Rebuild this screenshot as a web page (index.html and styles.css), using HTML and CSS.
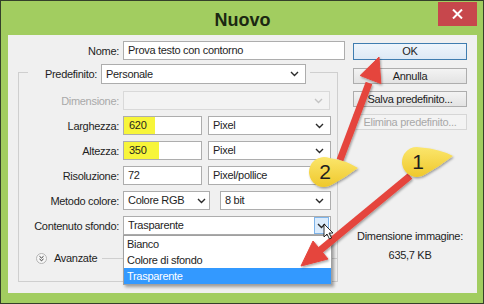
FILE: index.html
```html
<!DOCTYPE html>
<html lang="it">
<head>
    <meta charset="UTF-8">
    <title>Nuovo</title>
    <link rel="stylesheet" href="styles.css">
</head>
<body>
<div class="window">
    <!-- Title bar -->
    <div class="titlebar">
        <span></span>
        <div class="title">Nuovo</div>
        <button class="close">
            <svg width="11" height="10" viewBox="0 0 11 10"><path d="M1 0.5 L10 9.5 M10 0.5 L1 9.5" stroke="#fff" stroke-width="2"/></svg>
        </button>
    </div>

    <div class="client">
        <div class="main">
            <div class="row row-name">
                <label class="label label-name">Nome:</label>
                <div class="field w-name">Prova testo con contorno</div>
            </div>

            <!-- Preset group -->
            <div class="group">
                <div class="group-head">
                    <label class="label label-head">Predefinito:</label>
                    <div class="select w-preset"><span>Personale</span><svg class="chev" viewBox="0 0 9 6"><path d="M1 1 L4.5 4.5 L8 1"/></svg></div>
                </div>

                <div class="rows">
                    <div class="row">
                        <label class="label disabled">Dimensione:</label>
                        <div class="select w-dim off"><span></span><svg class="chev" viewBox="0 0 9 6"><path d="M1 1 L4.5 4.5 L8 1"/></svg></div>
                    </div>
                    <div class="row">
                        <label class="label">Larghezza:</label>
                        <div class="field w-num"><span class="mark">620</span></div>
                        <div class="select w-unit"><span>Pixel</span><svg class="chev" viewBox="0 0 9 6"><path d="M1 1 L4.5 4.5 L8 1"/></svg></div>
                    </div>
                    <div class="row">
                        <label class="label">Altezza:</label>
                        <div class="field w-num"><span class="mark mark-wide">350</span></div>
                        <div class="select w-unit"><span>Pixel</span><svg class="chev" viewBox="0 0 9 6"><path d="M1 1 L4.5 4.5 L8 1"/></svg></div>
                    </div>
                    <div class="row">
                        <label class="label">Risoluzione:</label>
                        <div class="field w-num pad">72</div>
                        <div class="select w-unit"><span>Pixel/pollice</span><svg class="chev" viewBox="0 0 9 6"><path d="M1 1 L4.5 4.5 L8 1"/></svg></div>
                    </div>
                    <div class="row">
                        <label class="label">Metodo colore:</label>
                        <div class="select w-mode"><span>Colore RGB</span><svg class="chev" viewBox="0 0 9 6"><path d="M1 1 L4.5 4.5 L8 1"/></svg></div>
                        <div class="select w-bits"><span>8 bit</span><svg class="chev" viewBox="0 0 9 6"><path d="M1 1 L4.5 4.5 L8 1"/></svg></div>
                    </div>
                    <div class="row">
                        <label class="label">Contenuto sfondo:</label>
                        <div class="select w-bg open">
                            <span>Trasparente</span>
                            <span class="drop-btn"><svg class="chev" viewBox="0 0 9 6"><path d="M1 1 L4.5 4.5 L8 1"/></svg></span>
                            <!-- Open dropdown list -->
                            <ul class="menu">
                                <li>Bianco</li>
                                <li>Colore di sfondo</li>
                                <li class="selected">Trasparente</li>
                            </ul>
                        </div>
                    </div>
                </div>

                <div class="advanced">
                    <svg class="adv-icon" width="11" height="11" viewBox="0 0 11 11">
                        <circle cx="5.5" cy="5.5" r="5" fill="#f7f7f7" stroke="#b4b4b4"/>
                        <path d="M3.5 3.3 L5.5 5 L7.5 3.3 M3.5 6 L5.5 7.7 L7.5 6" fill="none" stroke="#333" stroke-width="1"/>
                    </svg>
                    <span>Avanzate</span>
                    <span class="rule"></span>
                </div>
            </div>
        </div>

        <!-- Buttons column -->
        <div class="side">
            <div class="btn btn-ok">OK</div>
            <div class="btn">Annulla</div>
            <div class="btn">Salva predefinito...</div>
            <div class="btn btn-off">Elimina predefinito...</div>
            <div class="info">Dimensione immagine:</div>
            <div class="info info-size">635,7 KB</div>
        </div>
    </div>

    <!-- Tutorial annotations drawn over the dialog -->
    <svg class="annotations" width="484" height="304" viewBox="0 0 484 304">
        <defs>
            <linearGradient id="yel" x1="0" y1="0" x2="0" y2="1">
                <stop offset="0" stop-color="#fbe66c"/>
                <stop offset="1" stop-color="#efc82c"/>
            </linearGradient>
            <filter id="sh" x="-20%" y="-20%" width="140%" height="140%">
                <feDropShadow dx="1" dy="1.5" stdDeviation="1.2" flood-opacity="0.35"/>
            </filter>
        </defs>

        <g filter="url(#sh)" fill="#e5453d" stroke="#e5453d">
            <line x1="340" y1="160" x2="369" y2="83" stroke-width="7"/>
            <polygon points="379,57 380.8,83.5 360.2,75.5" stroke-width="1" stroke-linejoin="round"/>
            <line x1="410" y1="176" x2="318" y2="252" stroke-width="7"/>
            <polygon points="301,266 328,259 313,241" stroke-width="1" stroke-linejoin="round"/>
        </g>

        <g filter="url(#sh)" fill="url(#yel)">
            <path d="M329.4 158 Q345 160 358 168 Q346 177 331.8 184.8 A15 15 0 1 1 329.4 158 Z"/>
            <path d="M421 147.5 Q440 149 453 156 Q440 166 425.5 174.3 A15 15 0 1 1 421 147.5 Z"/>
        </g>
        <text class="num" x="325" y="179">2</text>
        <text class="num" x="418" y="169">1</text>

        <path class="cursor" d="M324 224 L324 237 L327 234 L329.5 239 L331.5 238 L329 233 L333 233 Z"/>
    </svg>
</div>
</body>
</html>
```

FILE: styles.css
```css
/* Page */
body {
    margin: 0;
    font-family: "Liberation Sans", Arial, sans-serif;
    font-size: 11px;
    letter-spacing: -0.3px;
    color: #1e1e1e;
}

/* Dialog window with green frame */
.window {
    position: relative;
    width: 484px;
    height: 304px;
    box-sizing: border-box;
    border: 1px solid #34402a;
    background: #a2cd60;
    padding: 0 6px 10px 7px;
    display: flex;
    flex-direction: column;
}

.titlebar {
    height: 34px;
    flex: none;
    display: grid;
    grid-template-columns: 1fr auto 1fr;
    align-items: start;
}

.title {
    font-size: 18px;
    font-weight: bold;
    letter-spacing: 0;
    line-height: 30px;
    padding-top: 4px;
    color: #1b2812;
}

.close {
    justify-self: end;
    margin-top: 1px;
    width: 39px;
    height: 24px;
    border: 0;
    padding: 0;
    background: #c7474c;
    display: flex;
    align-items: center;
    justify-content: center;
}

/* Client area */
.client {
    flex: 1;
    background: #f0f0f0;
    display: flex;
}

.main {
    width: 345px;
    flex: none;
}

/* Rows, labels and fields */
.row {
    display: flex;
    align-items: center;
    height: 19px;
}

.row-name {
    margin-top: 6px;
}

.label {
    flex: none;
    width: 100px;
    margin-right: 4px;
    text-align: right;
    white-space: nowrap;
}
.label-name { width: 111px; }
.label-head { width: 69px; }
.disabled { color: #a9a9a9; }

.field,
.select {
    flex: none;
    height: 19px;
    box-sizing: border-box;
    border: 1px solid #adadad;
    background: #fff;
    line-height: 17px;
    white-space: nowrap;
}

.field { padding: 0 3px 0 0; }
.field.pad { padding-left: 4px; }
.w-name { width: 222px; padding-left: 4px; }

.select {
    display: flex;
    justify-content: space-between;
    align-items: center;
    padding: 0 6px 0 4px;
}

.chev {
    width: 9px;
    height: 6px;
    fill: none;
    stroke: #2b2b2b;
    stroke-width: 1.4;
}

.select.off {
    background: #f3f3f3;
    border-color: #d9d9d9;
}
.select.off .chev { stroke: #c4c4c4; }

.w-preset { width: 205px; height: 20px; }
.w-dim { width: 207px; }
.w-num { width: 79px; }
.w-unit { width: 123px; margin-left: 6px; }
.w-mode { width: 87px; padding-right: 3px; }
.w-bits { width: 111px; margin-left: 10px; }
.w-bg { width: 208px; }

/* Yellow marker highlight */
.mark {
    display: inline-block;
    height: 17px;
    padding: 0 9px 0 5px;
    background: #f7f53a;
}
.mark-wide { padding-right: 13px; }

/* Group box */
.group {
    margin: 12px 0 0 10px;
    width: 318px;
    border: 1px solid #cfcfcf;
    padding-bottom: 15px;
}

.group-head {
    width: fit-content;
    margin: -9px 0 0 9px;
    padding-right: 4px;
    height: 20px;
    display: flex;
    align-items: center;
    background: #f0f0f0;
}

.rows {
    margin-top: 7px;
    display: flex;
    flex-direction: column;
    gap: 6px;
}

/* Open combo box */
.select.open {
    position: relative;
    padding-right: 1px;
}

.drop-btn {
    width: 15px;
    height: 17px;
    box-sizing: border-box;
    border: 1px solid #7eb4ea;
    background: #dcecfc;
    display: flex;
    align-items: center;
    justify-content: center;
}

.menu {
    position: absolute;
    top: 18px;
    left: -1px;
    width: 209px;
    box-sizing: border-box;
    margin: 0;
    padding: 0;
    list-style: none;
    border: 1px solid #a0a0a0;
    background: #fff;
    box-shadow: 2px 2px 3px rgba(0, 0, 0, 0.35);
    z-index: 2;
}

.menu li {
    height: 16px;
    line-height: 16px;
    padding-left: 3px;
}

.menu .selected {
    background: #3399ff;
    color: #fff;
}

/* Avanzate toggle */
.advanced {
    margin-top: 15px;
    height: 16px;
    padding-left: 17px;
    display: flex;
    align-items: center;
}

.adv-icon { flex: none; margin-right: 7px; }

.rule {
    flex: 1;
    height: 1px;
    margin-left: 5px;
    background: #cfcfcf;
}

/* Buttons column */
.side {
    width: 114px;
    flex: none;
    padding-top: 8px;
    display: flex;
    flex-direction: column;
}

.btn {
    height: 16px;
    box-sizing: border-box;
    margin-top: 7px;
    border: 1px solid #adadad;
    background: linear-gradient(#f3f3f3, #e3e3e3);
    text-align: center;
    line-height: 14px;
}

.btn-ok {
    height: 17px;
    margin-top: 0;
    border-color: #3f7db0;
    background: linear-gradient(#eef5fc, #dde9f5);
    line-height: 15px;
}

.btn-ok + .btn { margin-top: 8px; }

.btn-off {
    color: #a8a8a8;
    border-color: #d6d6d6;
    background: #f3f3f3;
}

.info {
    text-align: center;
    line-height: 16px;
    margin-top: 98px;
}
.info-size { margin-top: 3px; }

/* Overlay with arrows and numbered callouts */
.annotations {
    position: absolute;
    top: -1px;
    left: -1px;
    pointer-events: none;
    z-index: 5;
}

.num {
    font-family: "Liberation Sans", Arial, sans-serif;
    font-size: 21px;
    letter-spacing: 0;
    text-anchor: middle;
    fill: #1e1e1e;
}

.cursor {
    fill: #fff;
    stroke: #000;
    stroke-width: 0.8;
}
```
